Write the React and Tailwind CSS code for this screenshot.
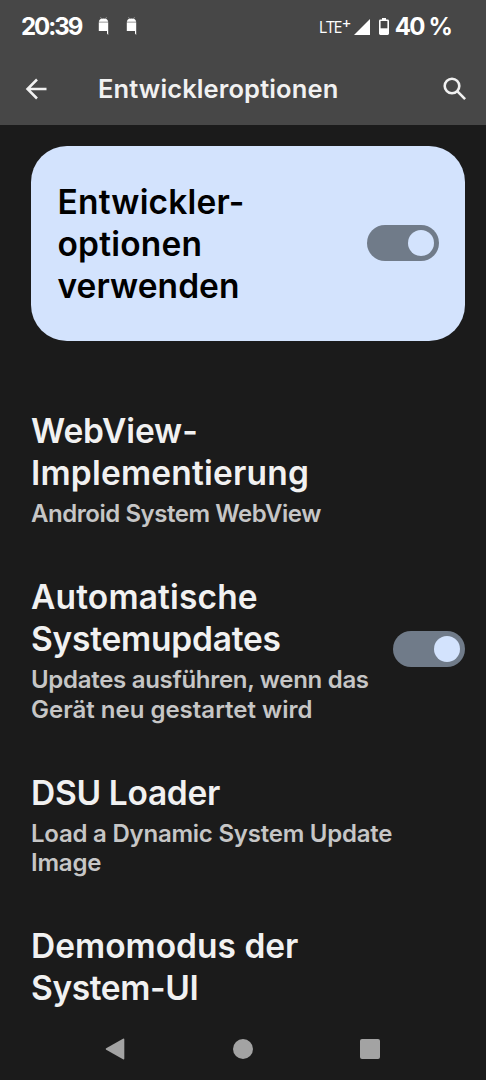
const Switch = () => (
  <div className="mb-[2px] flex h-9 w-18 shrink-0 items-center justify-end rounded-full bg-[#707b89] pr-[5px]">
    <div className="size-[26px] rounded-full bg-[#d3e3fd]" />
  </div>
);

const DroidIcon = () => (
  <svg className="h-[19px] w-[12px] shrink-0" viewBox="0 0 12 19" fill="white">
    <path d="M.9 4.7C1.2 2.3 2.5 1.5 5.5 1.5s4.3.8 4.6 3.2z" />
    <path d="M2.5 .2l1 1.8M8.5 .2l-1 1.8" stroke="white" strokeWidth=".4" />
    <path d="M.8 4.7h9.4v.8H.8z" opacity=".6" />
    <path d="M.8 5.5h9.4V18l-1.2-1.5V14H.8z" />
  </svg>
);

const Line = ({ children, className = "" }) => (
  <span className={`block w-fit whitespace-nowrap ${className}`}>{children}</span>
);

const Preference = ({ title, summary, toggle }) => (
  <div className="flex items-center justify-between">
    <div>
      <h2 className="text-[33.5px] leading-[42px] font-semibold text-[#f1f1f1]">
        {title.map((line) => (
          <Line key={line.text} className={line.tracking}>
            {line.text}
          </Line>
        ))}
      </h2>
      {summary && (
        <p className="mt-[5px] text-[24px] leading-[29.4px] font-semibold text-[#c6c6c6]">
          {summary.map((line) => (
            <Line key={line.text} className={line.tracking}>
              {line.text}
            </Line>
          ))}
        </p>
      )}
    </div>
    {toggle && <Switch />}
  </div>
);

const preferences = [
  {
    title: [
      { text: "WebView-", tracking: "tracking-[-0.1px]" },
      { text: "Implementierung", tracking: "tracking-[0.2px]" },
    ],
    summary: [{ text: "Android System WebView", tracking: "tracking-[-0.45px]" }],
  },
  {
    title: [
      { text: "Automatische", tracking: "tracking-[0.15px]" },
      { text: "Systemupdates", tracking: "tracking-[-0.22px]" },
    ],
    summary: [
      { text: "Updates ausführen, wenn das", tracking: "tracking-[-0.3px]" },
      { text: "Gerät neu gestartet wird" },
    ],
    toggle: true,
  },
  {
    title: [{ text: "DSU Loader", tracking: "tracking-[-0.3px]" }],
    summary: [
      { text: "Load a Dynamic System Update", tracking: "tracking-[-0.23px]" },
      { text: "Image", tracking: "tracking-[-0.2px]" },
    ],
  },
  {
    title: [
      { text: "Demomodus der" },
      { text: "System-UI", tracking: "tracking-[-0.4px]" },
    ],
  },
];

const StatusBar = () => (
  <div className="flex h-[53px] items-center text-[24px] font-bold text-white">
    <span className="ml-[21px] w-[77px] tracking-[-2px]">20:39</span>
    <DroidIcon />
    <span className="w-4" />
    <DroidIcon />
    <span className="ml-auto flex font-['Open_Sans',sans-serif] text-[16px] font-normal tracking-[-1.2px]">
      LTE
      <span className="-mt-[3px] ml-px text-[15px] font-semibold">+</span>
    </span>
    <svg className="ml-1 size-4 shrink-0" viewBox="0 0 16 16" fill="white">
      <path d="M16 0v16H0z" />
    </svg>
    <svg className="ml-[9px] h-[17px] w-[10px] shrink-0" viewBox="0 0 10 17" fill="none">
      <path d="M3 0h4v2H3z" fill="white" />
      <rect x=".8" y="2.3" width="8.4" height="13.9" rx=".6" stroke="white" strokeWidth="1.6" />
      <path d="M1 10.3h8V16H1z" fill="white" />
    </svg>
    <span className="mr-[35px] ml-[6px] tracking-[-1.8px] [word-spacing:1px]">40 %</span>
  </div>
);

const AppBar = () => (
  <div className="flex h-[72px] items-center">
    <svg className="ml-[25px] size-[22px]" viewBox="0 0 22 22" fill="none" stroke="#f1f1f1" strokeWidth="2.5">
      <path d="M21.5 11H3M12 1.5L2.5 11l9.5 9.5" />
    </svg>
    <h1 className="ml-[51px] text-[25.5px] font-semibold text-[#f1f1f1]">
      <Line className="tracking-[0.12px]">Entwickleroptionen</Line>
    </h1>
    <svg className="mr-[19px] ml-auto size-[24px]" viewBox="0 0 24 24" fill="none" stroke="#f1f1f1" strokeWidth="2.6">
      <circle cx="9" cy="9" r="7.3" />
      <path d="M14.2 14.2l7.9 7.9" />
    </svg>
  </div>
);

const NavBar = () => (
  <div className="flex h-[62px] shrink-0 items-center">
    <svg className="ml-[105px] h-[22px] w-5" viewBox="0 0 20 22" fill="#a3a3a3">
      <path d="M1.2 10.2L18 .8q1.3-.6 1.3.8v18.8q0 1.4-1.3.8L1.2 11.8q-1.2-.8 0-1.6z" />
    </svg>
    <div className="ml-[108px] size-5 rounded-full bg-[#a3a3a3]" />
    <div className="ml-[107px] size-5 rounded-[2px] bg-[#a3a3a3]" />
  </div>
);

export default function App() {
  return (
    <div className="flex h-[1080px] w-[486px] flex-col overflow-hidden bg-[#1b1b1b] font-['Inter',sans-serif]">
      <header className="h-[125px] shrink-0 bg-[#474747]">
        <StatusBar />
        <AppBar />
      </header>
      <main className="min-h-0 flex-1 overflow-hidden pt-[21px] pr-[21px] pl-[31px]">
        <div className="flex h-[195px] items-center justify-between rounded-[36px] bg-[#d3e3fd] pr-[26px] pl-[26.5px]">
          <div className="text-[33.5px] leading-[42px] font-semibold text-black">
            <Line className="tracking-[0.2px]">Entwickler-</Line>
            <Line className="tracking-[0.2px]">optionen</Line>
            <Line className="tracking-[0.05px]">verwenden</Line>
          </div>
          <Switch />
        </div>
        <div className="mt-[69px] flex flex-col gap-[47.8px]">
          {preferences.map((item) => (
            <Preference key={item.title[0].text} {...item} />
          ))}
        </div>
      </main>
      <NavBar />
    </div>
  );
}
